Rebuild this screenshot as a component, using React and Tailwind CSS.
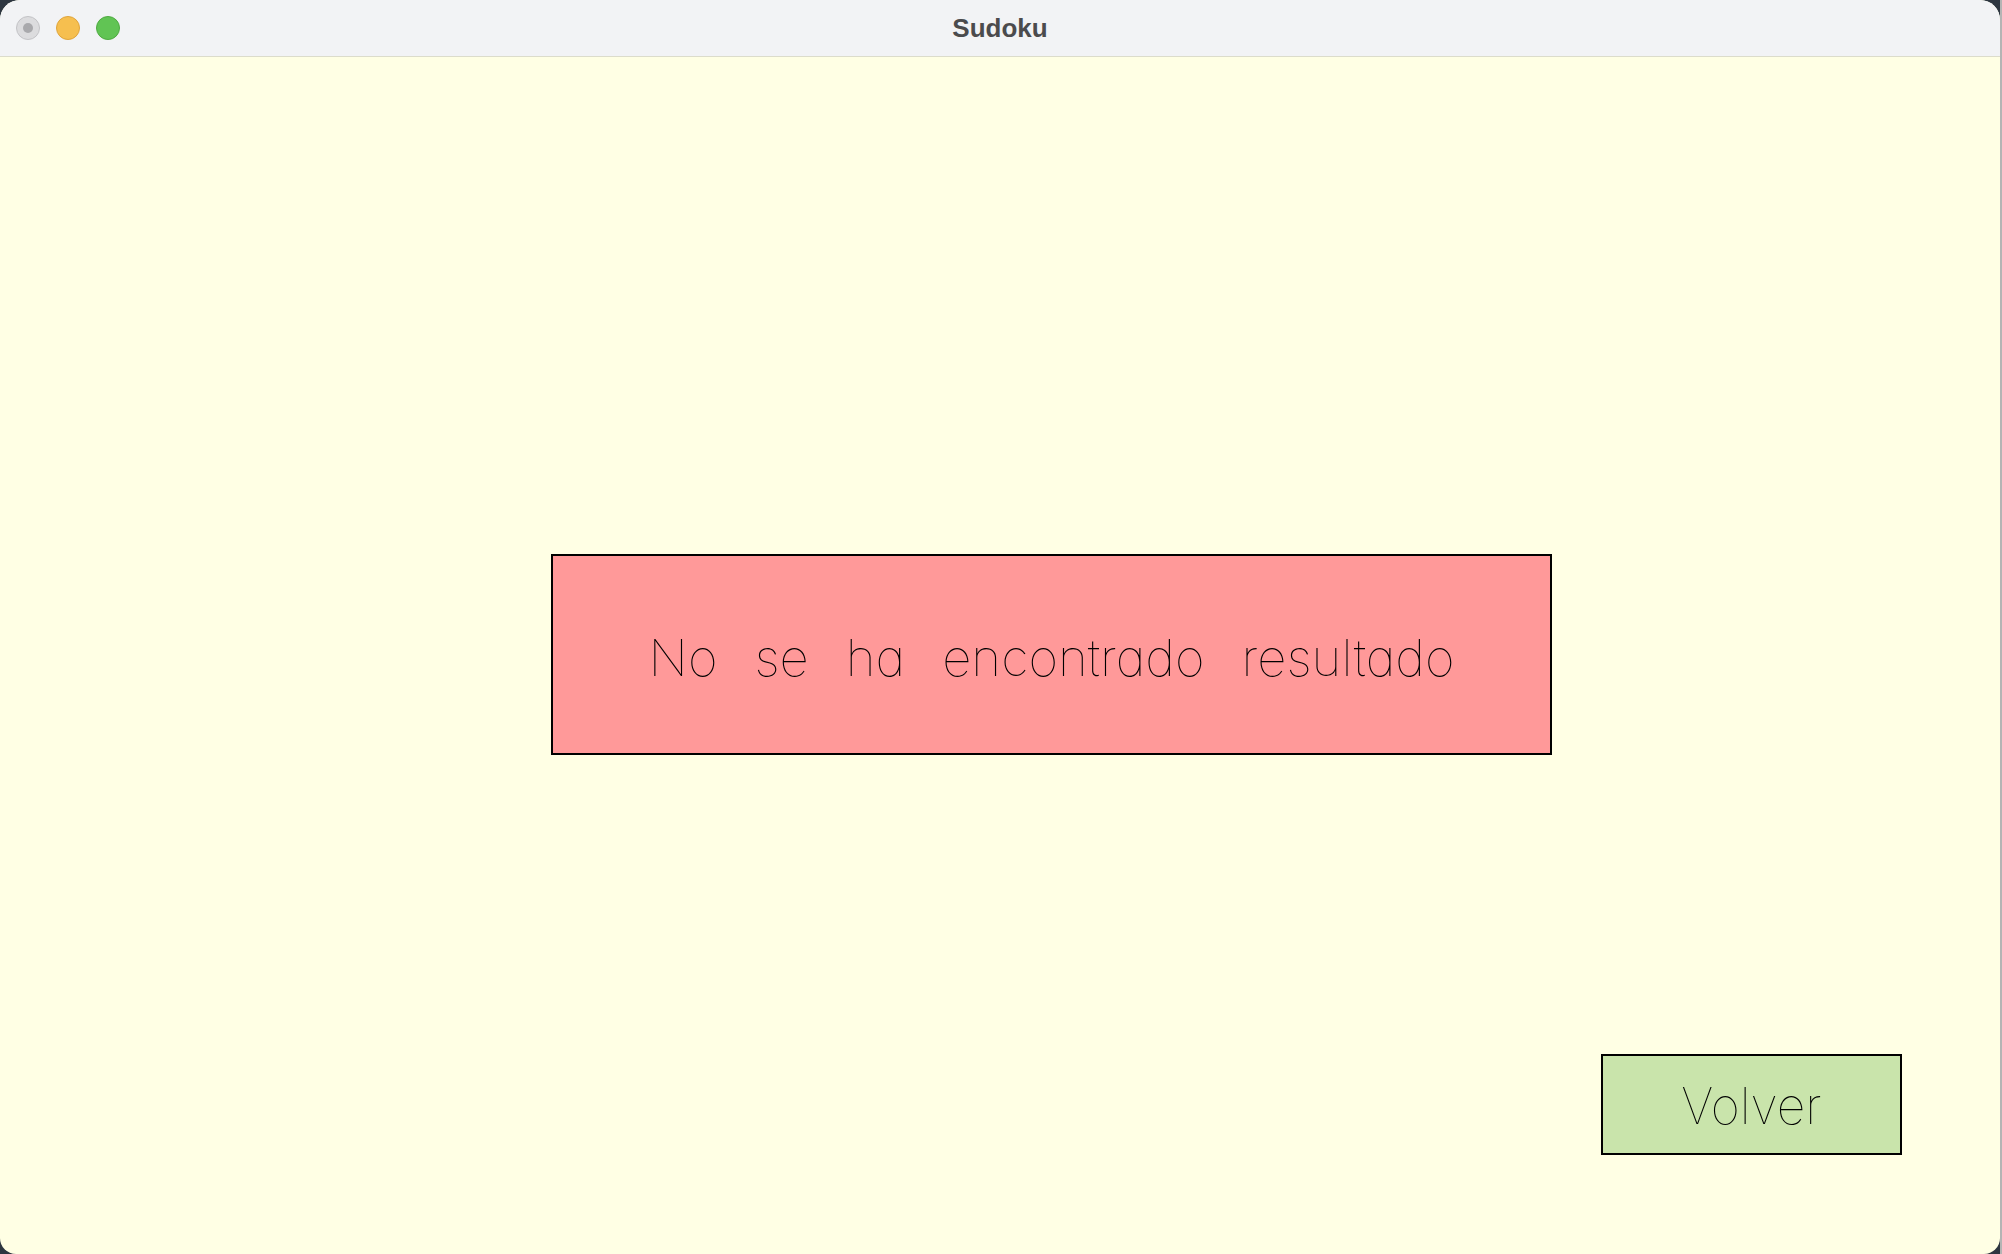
import React from 'react';

const thin = "font-['Inter','Liberation_Sans',sans-serif] font-thin [font-feature-settings:'cv11']";

function TrafficLights() {
  return (
    <div className="flex items-center gap-4 pl-4">
      <div className="w-6 h-6 rounded-full bg-[#dcdcde] border border-[#c3c3c6] flex items-center justify-center">
        <div className="w-2.5 h-2.5 rounded-full bg-[#a9a9ac]" />
      </div>
      <div className="w-6 h-6 rounded-full bg-[#f6bf4f] border border-[#dfa43c]" />
      <div className="w-6 h-6 rounded-full bg-[#61c454] border border-[#4faa41]" />
    </div>
  );
}

export default function App() {
  const words = ['No', 'se', 'ha', 'encontrado', 'resultado'];

  return (
    <div className="flex w-[2002px] h-[1254px] bg-[#2d3640] overflow-hidden">
      {/* Window */}
      <div className="w-[2000px] h-full flex flex-col bg-[#ffffe4] rounded-t-[20px] rounded-b-[16px] overflow-hidden">
        {/* Title bar */}
        <header className="relative h-[57px] shrink-0 flex items-center bg-[#f2f3f5] border-b border-[#dcdccb]">
          <TrafficLights />
          <h1 className="absolute inset-x-0 text-center text-[26px] font-bold text-[#4b4b4d] font-['Liberation_Sans',sans-serif] pointer-events-none">
            Sudoku
          </h1>
        </header>

        {/* Content */}
        <main className="flex-1 flex flex-col">
          <div className="ml-[551px] mt-[497px] w-[1001px] h-[201px] bg-[#ff9999] border-2 border-black flex items-center justify-center">
            <p className={`flex gap-[37px] pt-[5px] text-[51px] leading-none text-black ${thin}`}>
              {words.map((w) => (
                <span key={w}>{w}</span>
              ))}
            </p>
          </div>

          <button className="ml-[1601px] mt-[299px] w-[301px] h-[101px] bg-[#c9e4ab] border-2 border-black flex items-center justify-center">
            <span className={`pt-[3px] text-[50px] leading-none text-black ${thin}`}>Volver</span>
          </button>
        </main>
      </div>

      {/* Desktop strip to the right */}
      <div className="flex-1 bg-[#b4b4b4]" />
    </div>
  );
}
